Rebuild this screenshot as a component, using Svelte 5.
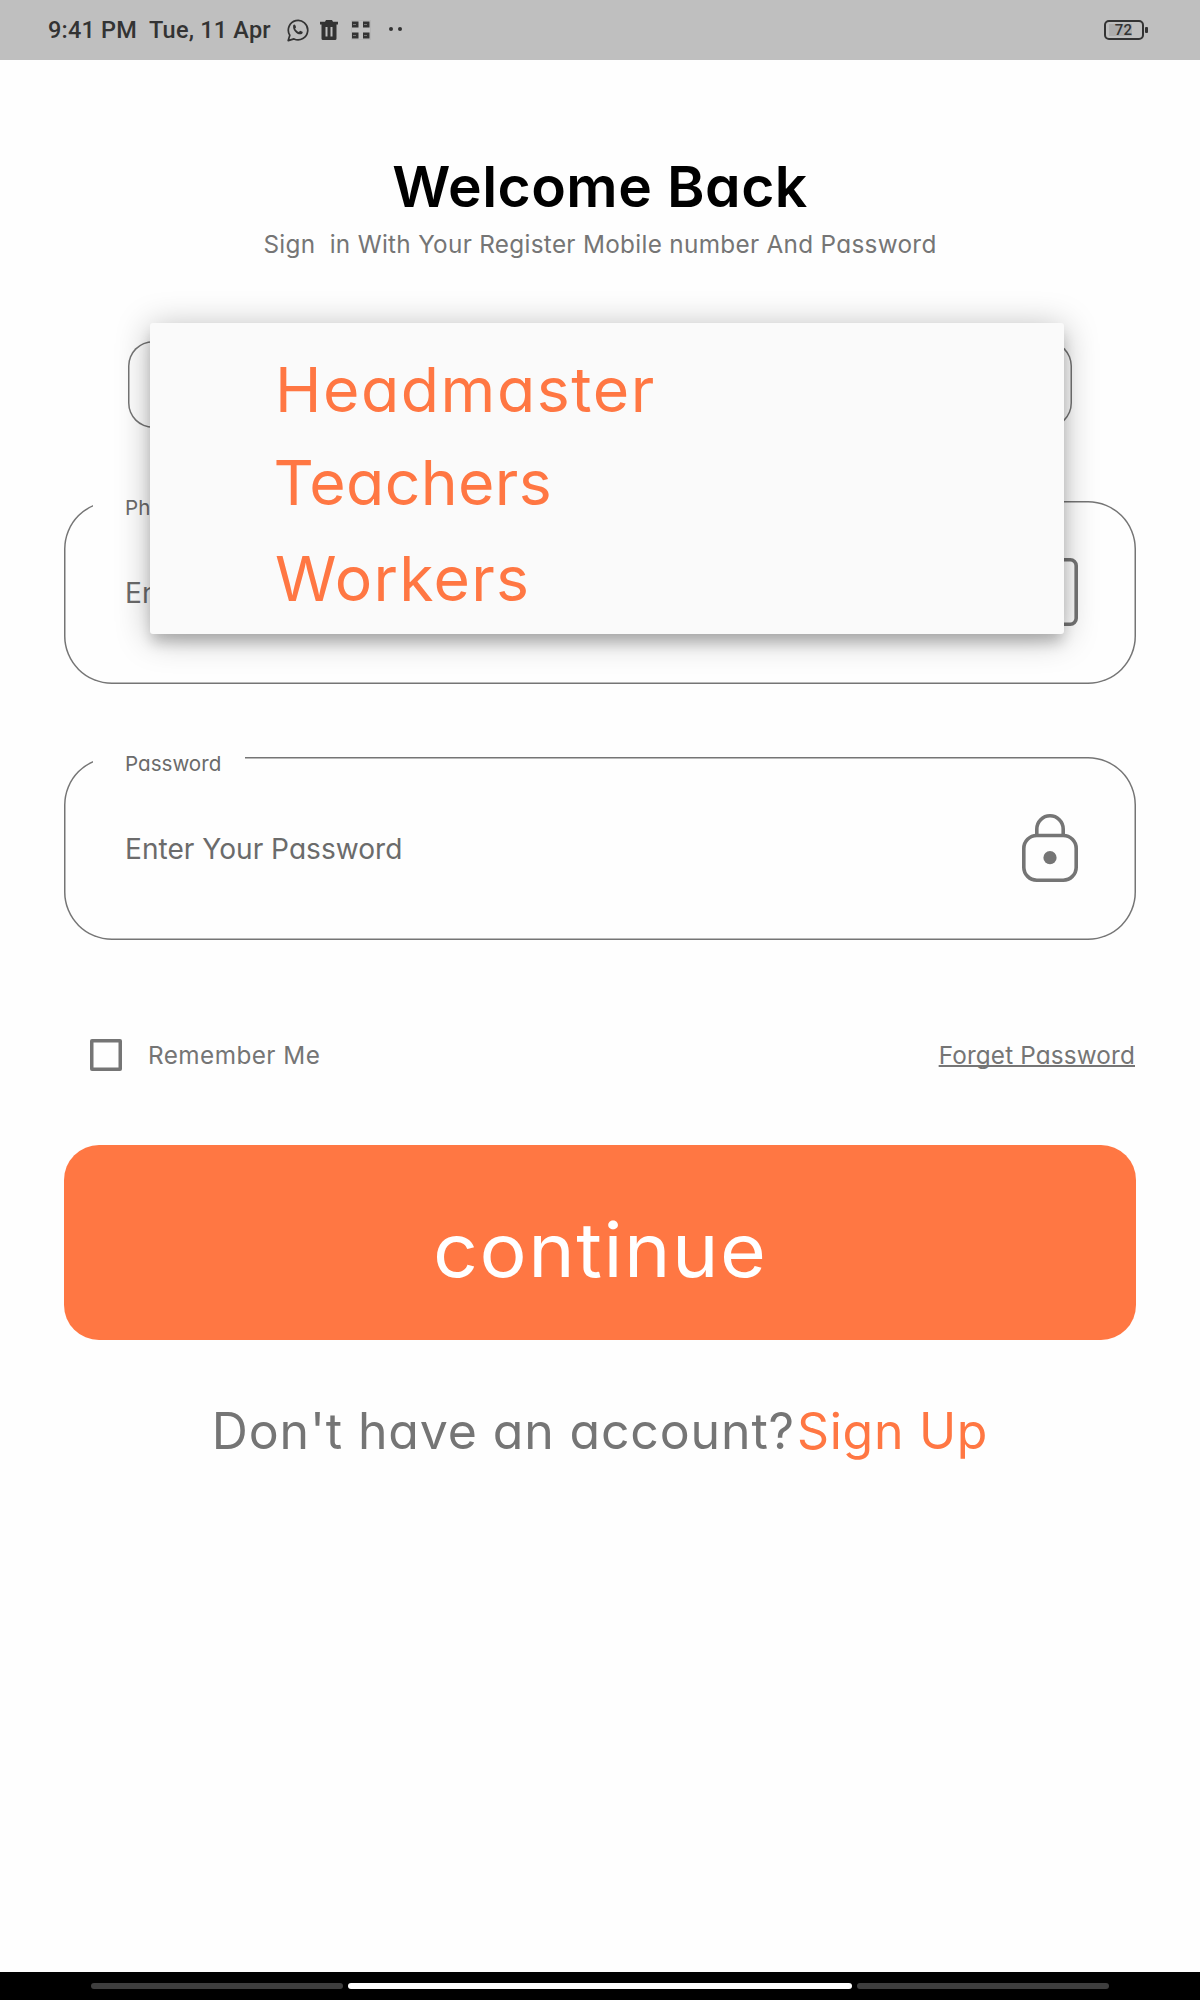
<script>
  const roles = ['Headmaster', 'Teachers', 'Workers'];
</script>

<div class="screen">
  <header class="status">
    <span class="clock">9:41 PM</span>
    <span class="date">Tue, 11 Apr</span>
    <svg class="ic-chat" width="22" height="24" viewBox="0 0 22 24" fill="none">
      <path d="M1.2 22.600 2.800 17.200A9.700 9.700 0 1 1 7 20.900Z" stroke="#333" stroke-width="1.700" stroke-linejoin="round" />
      <path d="M6.200 7.200c.7-1 1.700-.9 2.100 0l.7 1.700c.1.6-.5 1.100-.9 1.600.8 1.700 2 2.800 3.800 3.500l1.200-1.300 2.400 1.100c.5.500.1 1.600-.8 2.200-3.600 1.700-9.600-3.300-8.500-8.800Z" fill="#333" />
    </svg>
    <svg class="ic-trash" width="18" height="20" viewBox="0 0 18 20">
      <path fill="#333" fill-rule="evenodd" d="M0 1.800h5L6 0h6l1 1.800h5V4.500h-1.500v14q0 1.500-1.500 1.500h-12q-1.500 0-1.500-1.500v-14H0ZM5.500 7v9.500h2V7ZM10.500 7v9.500h2V7Z" />
    </svg>
    <svg class="ic-grid" width="20" height="20" viewBox="0 0 20 20">
      <rect x=".5" y=".5" width="19" height="19" fill="none" stroke="#b5b5b5" />
      <path fill="#333" d="M1 1.500h6.500v6H1zM12 1.500h6.500v6H12zM1 12.500h6.500v6H1zM12 12.500h6.500v6H12z" />
      <path stroke="#777" d="M2 4.500h3M13 4.500h3M2 15.500h3M13 15.500h3" />
    </svg>
    <span class="dots"><i></i><i></i></span>
    <span class="battery"><b>72</b></span>
  </header>

  <main>
    <h1>Welcome Back</h1>
    <p class="sub">Sign  in With Your Register Mobile number And Password</p>

    <div class="select">
      <ul class="menu">
        {#each roles as role}
          <li class={role.toLowerCase()}>{role}</li>
        {/each}
      </ul>
    </div>

    <div class="field">
      <span class="label">Phone</span>
      <span class="hint">Enter</span>
      <svg width="56" height="70" viewBox="0 0 56 70" fill="none" stroke="#757575" stroke-width="3.600">
        <rect x="1.800" y="2.800" width="52.400" height="64.400" rx="6" />
      </svg>
    </div>

    <div class="field">
      <span class="label">Password</span>
      <span class="hint">Enter Your Password</span>
      <svg width="56" height="70" viewBox="0 0 56 70" fill="none" stroke="#757575" stroke-width="3.600">
        <path d="M14.800 22.500v-6.500a13.200 13.200 0 0 1 26.400 0v6.500" />
        <rect x="1.800" y="22.500" width="52.400" height="44.700" rx="13" />
        <circle cx="28" cy="44.700" r="6.600" fill="#757575" stroke="none" />
      </svg>
    </div>

    <div class="options">
      <span class="box"></span>
      <span class="remember">Remember Me</span>
      <span class="forget">Forget Password</span>
    </div>

    <div class="button"><span>continue</span></div>

    <p class="signup"><span class="ask">Don't have an account?</span><span class="link">Sign Up</span></p>
  </main>

  <footer><i></i><i class="on"></i><i></i></footer>
</div>

<style>
  :global(body) { margin: 0; background: #fefefe; }
  .screen {
    width: 1200px; height: 2000px; display: flex; flex-direction: column;
    font-family: Inter, "Open Sans", sans-serif; font-feature-settings: "cv11" 1, "calt" 0;
    color: #757575; background: #fefefe;
  }
  .status {
    height: 60px; box-sizing: border-box; padding: 0 56px 0 48px; display: flex; align-items: center;
    background: #bfbfbf; color: #333; font: 500 23.500px/61px Roboto, sans-serif; letter-spacing: .2px;
  }
  .date { margin-left: 12px; }
  .ic-chat { margin-left: 16px; }
  .ic-trash { margin-left: 11px; }
  .ic-grid { margin-left: 13px; }
  .dots { display: flex; gap: 5px; margin: -2px 0 0 18px; }
  .dots i { width: 4px; height: 4px; border-radius: 50%; background: #333; }
  .battery {
    position: relative; margin-left: auto; width: 40px; height: 20px; box-sizing: border-box;
    border: 2px solid #333; border-radius: 5px; text-align: center;
    background: linear-gradient(#adadad, #adadad) 3px 2px / 23px 12px no-repeat;
  }
  .battery::after {
    content: ""; position: absolute; right: -6px; top: 5px; width: 3px; height: 6px;
    border-radius: 1px; background: #333;
  }
  .battery b { display: block; margin-left: -1px; font: 500 15px/16px Roboto, sans-serif; }
  main { display: flex; flex-direction: column; padding: 97px 64px 0; }
  h1, p, ul { margin: 0; padding: 0; }
  h1 { font-size: 57px; line-height: 60px; font-weight: 600; letter-spacing: .45px; color: #000; text-align: center; }
  .sub {
    margin-top: 12px; font-size: 24.300px; line-height: 30px; letter-spacing: .31px;
    text-align: center; white-space: pre;
  }
  .select {
    position: relative; width: 944px; height: 86.500px; margin: 82px auto 0;
    border-radius: 25px; box-shadow: inset 0 0 0 1.500px #757575;
  }
  .menu {
    position: absolute; z-index: 2; left: 22px; top: -18px; width: 913.500px; height: 311px; box-sizing: border-box;
    padding: 18.500px 0 0 125px; list-style: none; background: #fafafa; border-radius: 3px; color: #ff7743;
    box-shadow: 0 10px 14px -2px rgba(0,0,0,.2), 0 4px 34px rgba(0,0,0,.28);
  }
  .menu li { font-size: 62.500px; line-height: 94.500px; letter-spacing: 1.550px; }
  .menu .teachers { line-height: 93.500px; margin-bottom: 1px; letter-spacing: .35px; text-indent: -1.500px; }
  .menu .workers { letter-spacing: 1.300px; }
  .field {
    position: relative; box-sizing: border-box; height: 183px; margin-top: 73px; padding: 0 58px 0 61px;
    border-radius: 48px; box-shadow: inset 0 0 0 1.500px #757575; display: flex; align-items: center;
    justify-content: space-between;
  }
  .label {
    position: absolute; left: 29px; top: -8px; padding: 0 24px 0 32px; font-size: 20.600px;
    line-height: 30px; background: #fefefe; color: #6b6b6b;
  }
  .hint { padding-top: 2px; font-size: 28.100px; line-height: 40px; color: #6b6b6b; }
  .options {
    display: flex; align-items: center; height: 32px; margin-top: 99.500px; padding: 0 1px 0 26px;
    font-size: 24.300px;
  }
  .box { width: 32px; height: 32px; box-sizing: border-box; border-radius: 2px; box-shadow: inset 0 0 0 3.500px #757575; }
  .remember { margin-left: 26px; letter-spacing: .45px; }
  .forget {
    margin-left: auto; letter-spacing: .15px; text-decoration: underline 2px; text-underline-offset: 1px;
    text-decoration-skip-ink: none;
  }
  .button {
    height: 195px; margin-top: 74px; border-radius: 35px; background: #ff7743; color: #fff;
    font-size: 75px; line-height: 210px; letter-spacing: 1.400px; text-align: center;
  }
  .button span { display: inline-block; transform: scaleX(1.05); }
  .signup { display: flex; justify-content: center; margin-top: 61px; font-size: 50px; line-height: 60px; letter-spacing: .850px; }
  .link { margin-left: 2px; color: #ff7743; letter-spacing: .7px; }
  footer {
    display: flex; align-items: center; justify-content: center; gap: 5px; height: 28px; margin-top: auto;
    background: #000;
  }
  footer i { width: 252px; height: 6px; border-radius: 3px; background: #3e3e3e; }
  footer .on { width: 504px; background: #fff; }
</style>
